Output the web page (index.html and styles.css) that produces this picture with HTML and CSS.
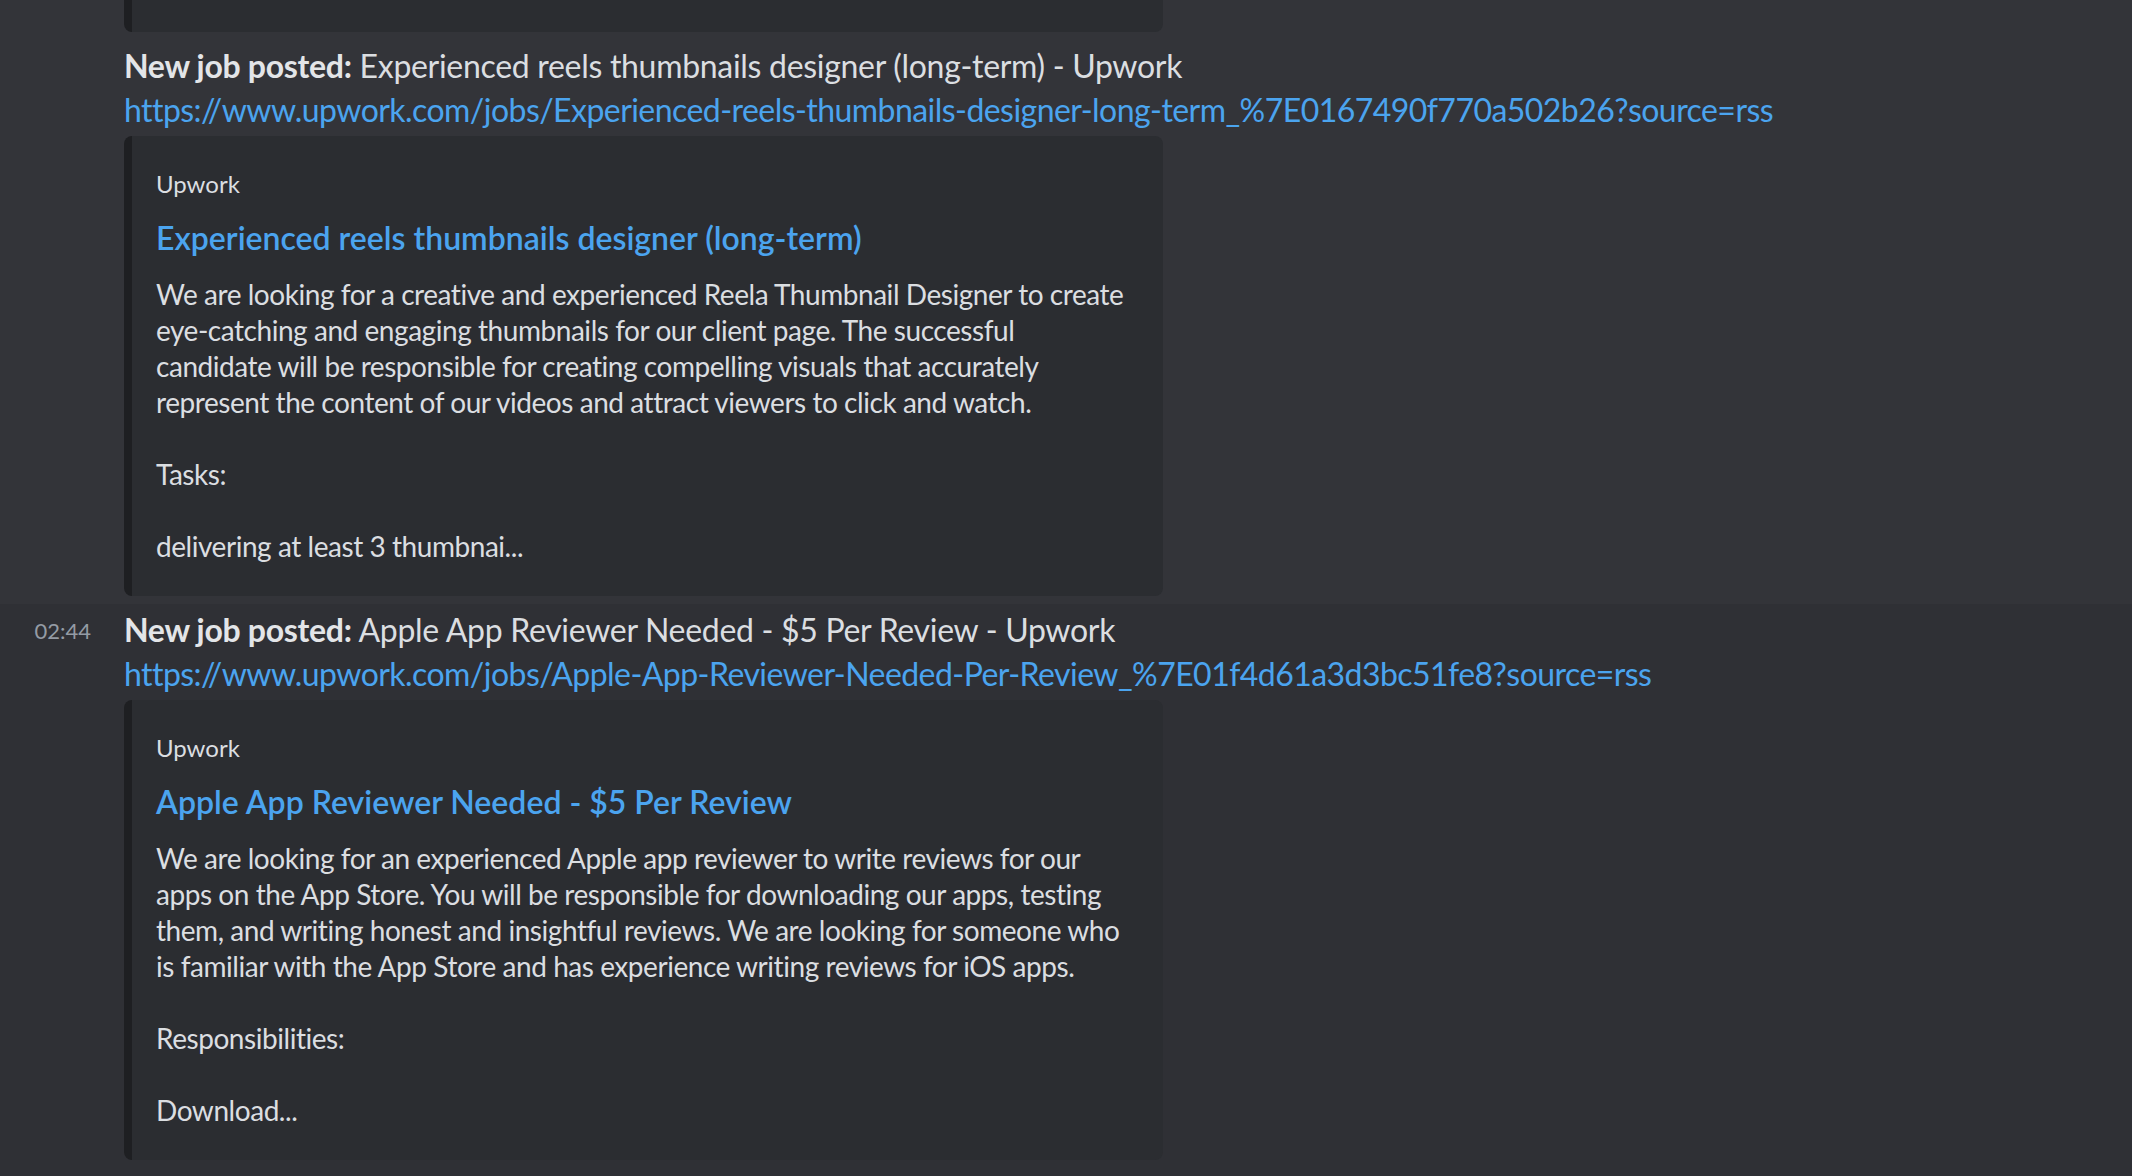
FILE: index.html
```html
<!DOCTYPE html>
<html lang="en">
<head>
<meta charset="utf-8">
<title>Upwork jobs feed</title>
<link rel="stylesheet" href="styles.css">
</head>
<body>
<main class="chat">
  <div class="message message-tail">
    <div class="gutter"></div>
    <div class="content">
      <div class="embed embed-tail"></div>
    </div>
  </div>

  <div class="message message-first">
    <div class="gutter"></div>
    <div class="content">
      <div class="text"><strong>New job posted:</strong> Experienced reels thumbnails designer (long-term) - Upwork<br><a class="link" href="#">https://www.upwork.com/jobs/Experienced-reels-thumbnails-designer-long-term_%7E0167490f770a502b26?source=rss</a></div>
      <article class="embed">
        <div class="provider">Upwork</div>
        <a class="embed-title" href="#">Experienced reels thumbnails designer (long-term)</a>
        <div class="embed-desc">We are looking for a creative and experienced Reela Thumbnail Designer to create<br>eye-catching and engaging thumbnails for our client page. The successful<br>candidate will be responsible for creating compelling visuals that accurately<br>represent the content of our videos and attract viewers to click and watch.<br><br>Tasks:<br><br>delivering at least 3 thumbnai...</div>
      </article>
    </div>
  </div>

  <div class="message message-hover">
    <div class="gutter"><span class="timestamp">02:44</span></div>
    <div class="content">
      <div class="text"><strong>New job posted:</strong> Apple App Reviewer Needed - $5 Per Review - Upwork<br><a class="link" href="#">https://www.upwork.com/jobs/Apple-App-Reviewer-Needed-Per-Review_%7E01f4d61a3d3bc51fe8?source=rss</a></div>
      <article class="embed">
        <div class="provider">Upwork</div>
        <a class="embed-title" href="#">Apple App Reviewer Needed - $5 Per Review</a>
        <div class="embed-desc">We are looking for an experienced Apple app reviewer to write reviews for our<br>apps on the App Store. You will be responsible for downloading our apps, testing<br>them, and writing honest and insightful reviews. We are looking for someone who<br>is familiar with the App Store and has experience writing reviews for iOS apps.<br><br>Responsibilities:<br><br>Download...</div>
      </article>
    </div>
  </div>
</main>
</body>
</html>
```

FILE: styles.css
```css
html, body {
  margin: 0;
  padding: 0;
}

body {
  background: #333439;
  color: #dbdee1;
  font-family: Lato, "Noto Sans", "Liberation Sans", sans-serif;
  height: 1176px;
  overflow: hidden;
}

.chat {
  display: flex;
  flex-direction: column;
}

.message {
  display: grid;
  grid-template-columns: 124px 1fr;
}

.message-tail {
  padding-bottom: 4px;
}

.message-first {
  padding-top: 8px;
  padding-bottom: 8px;
}

.message-hover {
  background: #2f3035;
  padding-top: 4px;
  padding-bottom: 40px;
}

.gutter {
  display: flex;
  justify-content: flex-end;
  padding-right: 33px;
}

.timestamp {
  font-size: 22px;
  line-height: 44px;
  color: #949ba4;
  padding-top: 1px;
}

.content {
  display: flex;
  flex-direction: column;
  gap: 4px;
  min-width: 0;
}

.text {
  font-size: 32px;
  line-height: 44px;
  color: #dbdee1;
  white-space: nowrap;
  letter-spacing: -0.3px;
}

.text strong {
  font-weight: 700;
  color: #e3e5e8;
}

.link {
  color: #4ba4ef;
  text-decoration: none;
  letter-spacing: -0.55px;
}

.embed {
  box-sizing: border-box;
  width: 1039px;
  background: #2b2d31;
  border-left: 8px solid #1e1f22;
  border-radius: 8px;
  padding: 32px 32px 32px 24px;
  display: flex;
  flex-direction: column;
  gap: 16px;
}

.embed-tail {
  height: 32px;
  padding: 0;
  border-radius: 0 0 8px 8px;
}

.provider {
  font-size: 24px;
  line-height: 32px;
  color: #dbdee1;
}

.embed-title {
  font-size: 32px;
  line-height: 44px;
  font-weight: 600;
  color: #4ba4ef;
  text-decoration: none;
}

.embed-desc {
  font-size: 28px;
  line-height: 36px;
  color: #dbdee1;
  white-space: nowrap;
  letter-spacing: -0.45px;
}
```
